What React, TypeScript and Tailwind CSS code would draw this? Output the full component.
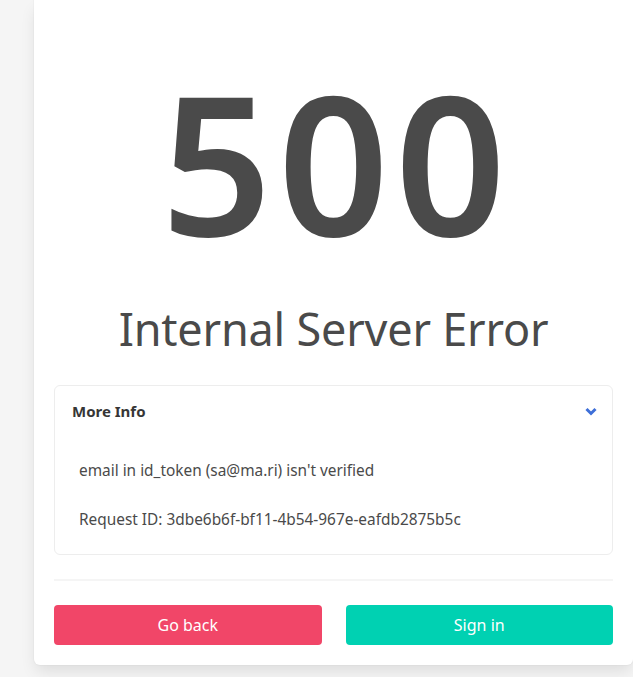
const font = { fontFamily: '"Noto Sans", "Open Sans", sans-serif' };

function AngleDown() {
  return (
    <svg width="12" height="9" viewBox="0 0 12 9" className="text-[#3e6fd8]">
      <path d="M1.5 2 L6 6.5 L10.5 2" fill="none" stroke="currentColor" strokeWidth="3" />
    </svg>
  );
}

export default function App() {
  return (
    <div className="min-h-screen bg-[#f5f5f5] pl-[34px]" style={font}>
      <div className="w-[599px] rounded-b-md bg-white px-5 pb-5 pt-[64px] text-[#4a4a4a] shadow-[0_8px_16px_-2px_rgba(10,10,10,0.1),0_0_0_1px_rgba(10,10,10,0.02)]">
        <h1 className="pl-[6px] text-center text-[194px] font-semibold leading-none tracking-[6px]">
          500
        </h1>
        <h2 className="mt-[48px] text-center text-[45px] leading-none tracking-[-0.2px]">
          Internal Server Error
        </h2>

        <div className="mt-[34px] rounded-md border border-[#ededed]">
          <div className="flex items-center justify-between py-[14px] pl-[17px] pr-[15px]">
            <span className="text-[15px] font-bold text-[#363636]">More Info</span>
            <AngleDown />
          </div>
          <div className="px-6 pb-[22px] pt-[22px] text-[15.4px] leading-6">
            <p>email in id_token (sa@ma.ri) isn't verified</p>
            <p className="mt-[25px]">Request ID: 3dbe6b6f-bf11-4b54-967e-eafdb2875b5c</p>
          </div>
        </div>

        <hr className="mt-6 h-[2px] border-0 bg-[#f5f5f5]" />

        <div className="mt-6 grid grid-cols-2 gap-6">
          <button className="h-10 rounded bg-[#f14668] text-base text-white">Go back</button>
          <button className="h-10 rounded bg-[#00d1b2] text-base text-white">Sign in</button>
        </div>
      </div>
    </div>
  );
}
